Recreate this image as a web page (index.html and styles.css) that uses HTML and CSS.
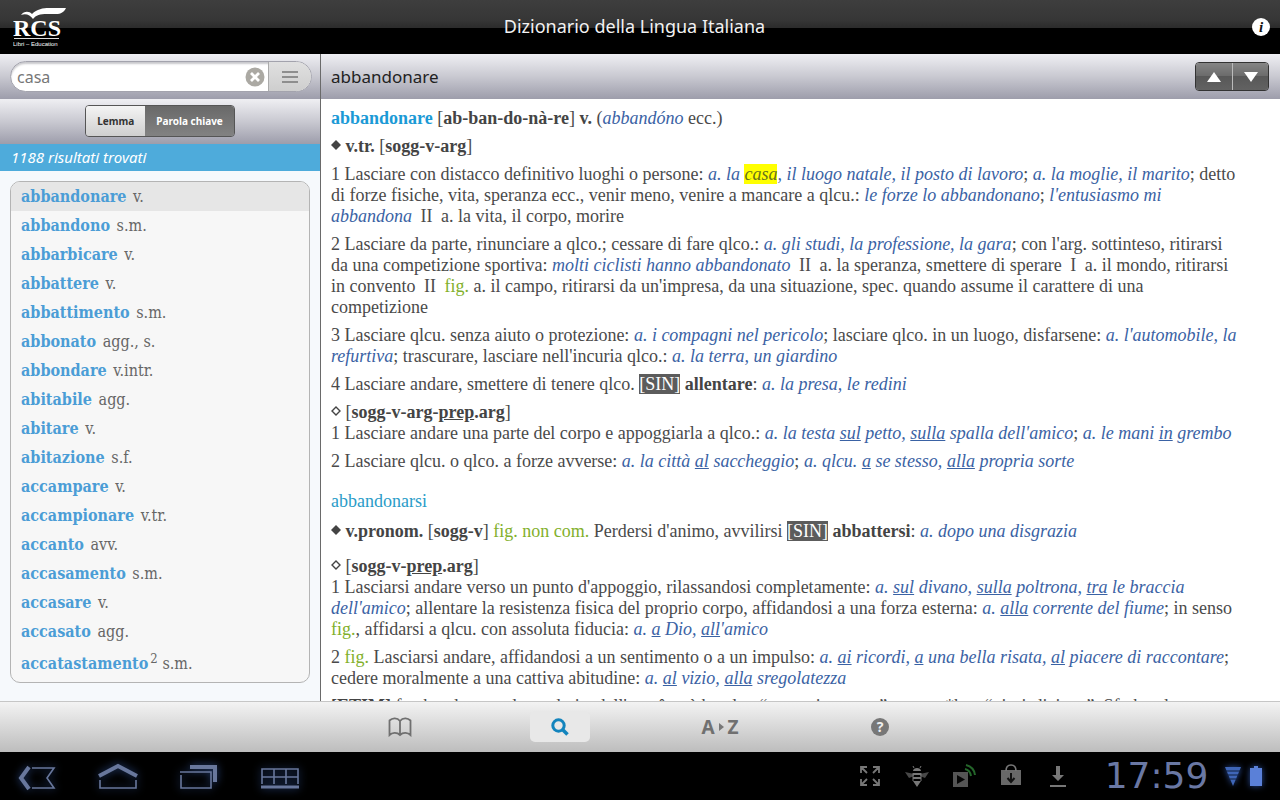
FILE: index.html
```html
<!DOCTYPE html>
<html lang="it">
<head>
<meta charset="utf-8">
<title>Dizionario della Lingua Italiana</title>
<link rel="stylesheet" href="styles.css">
</head>
<body>
<header class="titlebar">
  <svg class="logo" viewBox="0 0 56 42" role="img" aria-label="RCS Libri – Education">
    <path d="M8 9C11 5 16 5 19 8C24 3 30 2 36 2H53C51 6 48 8 43 8H34C27 8 23 9 20 13C17 9 13 7 8 9Z" fill="#fff"/>
    <text class="logo-name" x="0" y="30">RCS</text>
    <path d="M1 32.500H46" stroke="#ddd" stroke-width="1"/>
    <text class="logo-sub" x="0" y="40">Libri – Education</text>
  </svg>
  <h1 class="app-title">Dizionario della Lingua Italiana</h1>
  <button class="info" aria-label="Informazioni">i</button>
</header>

<main class="content">
  <aside class="sidebar">
    <form class="search-row">
      <div class="search-pill">
        <input class="search-input" type="text" value="casa" aria-label="Cerca">
        <button class="clear" type="button" aria-label="Cancella">
          <svg viewBox="0 0 20 20" width="20" height="20"><circle cx="10" cy="10" r="9.500" fill="#aba9a3"/><path d="M6 6L14 14M14 6L6 14" stroke="#fff" stroke-width="2.800"/></svg>
        </button>
        <button class="options" type="button" aria-label="Opzioni">
          <svg viewBox="0 0 16 14" width="16" height="14"><path d="M0 2H16M0 7H16M0 12H16" stroke="#8e8e8e" stroke-width="2"/></svg>
        </button>
      </div>
    </form>
    <div class="segment-row">
      <div class="segment">
        <button class="seg" type="button">Lemma</button>
        <button class="seg seg-on" type="button">Parola chiave</button>
      </div>
    </div>
    <p class="count">1188 risultati trovati</p>
    <div class="results">
      <ul class="list">
        <li class="item selected"><a href="#">abbandonare</a> v.</li>
        <li class="item"><a href="#">abbandono</a> s.m.</li>
        <li class="item"><a href="#">abbarbicare</a> v.</li>
        <li class="item"><a href="#">abbattere</a> v.</li>
        <li class="item"><a href="#">abbattimento</a> s.m.</li>
        <li class="item"><a href="#">abbonato</a> agg., s.</li>
        <li class="item"><a href="#">abbondare</a> v.intr.</li>
        <li class="item"><a href="#">abitabile</a> agg.</li>
        <li class="item"><a href="#">abitare</a> v.</li>
        <li class="item"><a href="#">abitazione</a> s.f.</li>
        <li class="item"><a href="#">accampare</a> v.</li>
        <li class="item"><a href="#">accampionare</a> v.tr.</li>
        <li class="item"><a href="#">accanto</a> avv.</li>
        <li class="item"><a href="#">accasamento</a> s.m.</li>
        <li class="item"><a href="#">accasare</a> v.</li>
        <li class="item"><a href="#">accasato</a> agg.</li>
        <li class="item last"><a href="#">accatastamento</a><sup>2</sup> s.m.</li>
      </ul>
    </div>
  </aside>

  <section class="entry">
    <div class="entry-bar">
      <h2 class="entry-title">abbandonare</h2>
      <div class="nav">
        <button class="nav-btn" aria-label="Precedente"><svg viewBox="0 0 14 10" width="14" height="10"><path d="M7 0L14 10H0Z" fill="#fff"/></svg></button>
        <button class="nav-btn" aria-label="Successivo"><svg viewBox="0 0 14 10" width="14" height="10"><path d="M0 0H14L7 10Z" fill="#fff"/></svg></button>
      </div>
    </div>
    <article class="text">
      <p><b class="head">abbandonare</b> [<b>ab-ban-do-nà-re</b>] <b>v.</b> (<i>abbandóno</i> ecc.)</p>
      <p><svg class="mark" viewBox="0 0 10 10"><path d="M5 0L10 5L5 10L0 5Z" fill="#444"/></svg> <b>v.tr.</b> [<b>sogg-v-arg</b>]</p>
      <p>1 Lasciare con distacco definitivo luoghi o persone: <i>a. la <mark>casa</mark>, il luogo natale, il posto di lavoro</i>; <i>a. la moglie, il marito</i>; detto<br>di forze fisiche, vita, speranza ecc., venir meno, venire a mancare a qlcu.: <i>le forze lo abbandonano</i>; <i>l'entusiasmo mi<br>abbandona</i> <span class="bars">II</span> a. la vita, il corpo, morire</p>
      <p>2 Lasciare da parte, rinunciare a qlco.; cessare di fare qlco.: <i>a. gli studi, la professione, la gara</i>; con l'arg. sottinteso, ritirarsi<br>da una competizione sportiva: <i>molti ciclisti hanno abbandonato</i> <span class="bars">II</span> a. la speranza, smettere di sperare <span class="bars">I</span> a. il mondo, ritirarsi<br>in convento <span class="bars">II</span> <span class="use">fig.</span> a. il campo, ritirarsi da un'impresa, da una situazione, spec. quando assume il carattere di una<br>competizione</p>
      <p>3 Lasciare qlcu. senza aiuto o protezione: <i>a. i compagni nel pericolo</i>; lasciare qlco. in un luogo, disfarsene: <i>a. l'automobile, la<br>refurtiva</i>; trascurare, lasciare nell'incuria qlco.: <i>a. la terra, un giardino</i></p>
      <p>4 Lasciare andare, smettere di tenere qlco. <span class="syn">[SIN]</span> <b>allentare</b>: <i>a. la presa, le redini</i></p>
      <p><svg class="mark" viewBox="0 0 10 10"><path d="M5 1L9 5L5 9L1 5Z" fill="none" stroke="#444" stroke-width="1.400"/></svg> [<b>sogg-v-arg-<u>prep</u>.arg</b>]<br>1 Lasciare andare una parte del corpo e appoggiarla a qlco.: <i>a. la testa <u>sul</u> petto, <u>sulla</u> spalla dell'amico</i>; <i>a. le mani <u>in</u> grembo</i></p>
      <p>2 Lasciare qlcu. o qlco. a forze avverse: <i>a. la città <u>al</u> saccheggio</i>; <i>a. qlcu. <u>a</u> se stesso, <u>alla</u> propria sorte</i></p>
      <h3 class="sub">abbandonarsi</h3>
      <p class="wide"><svg class="mark" viewBox="0 0 10 10"><path d="M5 0L10 5L5 10L0 5Z" fill="#444"/></svg> <b>v.pronom.</b> [<b>sogg-v</b>] <span class="use">fig. non com.</span> Perdersi d'animo, avvilirsi <span class="syn">[SIN]</span> <b>abbattersi</b>: <i>a. dopo una disgrazia</i></p>
      <p><svg class="mark" viewBox="0 0 10 10"><path d="M5 1L9 5L5 9L1 5Z" fill="none" stroke="#444" stroke-width="1.400"/></svg> [<b>sogg-v-<u>prep</u>.arg</b>]<br>1 Lasciarsi andare verso un punto d'appoggio, rilassandosi completamente: <i>a. <u>sul</u> divano, <u>sulla</u> poltrona, <u>tra</u> le braccia<br>dell'amico</i>; allentare la resistenza fisica del proprio corpo, affidandosi a una forza esterna: <i>a. <u>alla</u> corrente del fiume</i>; in senso<br><span class="use">fig.</span>, affidarsi a qlcu. con assoluta fiducia: <i>a. <u>a</u> Dio, <u>all</u>'amico</i></p>
      <p>2 <span class="use">fig.</span> Lasciarsi andare, affidandosi a un sentimento o a un impulso: <i>a. <u>ai</u> ricordi, <u>a</u> una bella risata, <u>al</u> piacere di raccontare</i>;<br>cedere moralmente a una cattiva abitudine: <i>a. <u>al</u> vizio, <u>alla</u> sregolatezza</i></p>
      <p><b>[ETIM]</b> fr. abandonner, da un deriv. dell'ant. être à bandon “essere in potere”, comp. *ban “giurisdizione”. Sfr. bando</p>
    </article>
  </section>
</main>

<nav class="toolbar">
  <button class="tool" aria-label="Dizionario">
    <svg viewBox="0 0 24 20" width="24" height="20" fill="none" stroke="#707070" stroke-width="1.800"><path d="M12 4C9 0 4 1 1.500 3.500V18C4 15.500 9 15 12 18C15 15 20 15.500 22.500 18V3.500C20 1 15 0 12 4ZM12 4V18"/></svg>
  </button>
  <button class="tool tool-on" aria-label="Cerca">
    <svg viewBox="0 0 18 18" width="18" height="18" fill="none" stroke="#1384bd"><circle cx="7.500" cy="7.500" r="5.700" stroke-width="3"/><path d="M11.500 11.500L16.500 16.500" stroke-width="3.600"/></svg>
  </button>
  <button class="tool tool-az" aria-label="Indice A-Z">A<svg viewBox="0 0 5 8" width="5" height="8"><path d="M0 0L5 4L0 8Z" fill="#777"/></svg>Z</button>
  <button class="tool" aria-label="Aiuto"><span class="help">?</span></button>
</nav>

<footer class="system">
  <div class="keys">
    <button class="key" aria-label="Indietro"><svg viewBox="0 0 40 30" width="40" height="30" fill="none" stroke="#68779c"><path d="M12 6L4 17L12 28" stroke-width="4"/><path d="M15 7H37L30 17L37 27H15" stroke-width="1.600"/></svg></button>
    <button class="key" aria-label="Home"><svg viewBox="0 0 40 30" width="40" height="30" fill="none" stroke="#68779c"><path d="M1 15L20 5L39 15" stroke-width="4"/><path d="M2 19V27H38V19" stroke-width="1.600"/></svg></button>
    <button class="key" aria-label="Recenti"><svg viewBox="0 0 40 30" width="40" height="30" fill="none" stroke="#68779c"><path d="M11 6H36V21" stroke-width="4"/><path d="M1 11H32V27H2V14" stroke-width="1.600"/></svg></button>
    <button class="key" aria-label="Tastiera"><svg viewBox="0 0 40 30" width="40" height="30" fill="none" stroke="#68779c"><path d="M2 23V8H38V23M2 16H38M14 8V23M26 8V23" stroke-width="1.600"/><path d="M1 26H39" stroke-width="3"/></svg></button>
  </div>
  <div class="status">
    <svg class="note" viewBox="0 0 24 24" fill="none" stroke="#777" stroke-width="1.800"><path d="M3 9V3H9M3 3L9 9M15 3H21V9M21 3L15 9M3 15V21H9M3 21L9 15M15 21H21V15M21 21L15 15"/></svg>
    <svg class="note" viewBox="0 0 24 24"><path d="M0 8L9 10V12L4 14ZM24 8L15 10V12L20 14Z" fill="#484848"/><path d="M8 7C8 3 16 3 16 7ZM8 9H16V11H8ZM8 13H16V15H8ZM8 17H16L12 23Z" fill="#777"/><path d="M9 4L8 2M15 4L16 2M8 9V17M16 9V17" stroke="#777"/></svg>
    <svg class="note" viewBox="0 0 24 24"><path d="M1 8H16V23H1Z" fill="#555"/><path d="M5 11L13 15.500L5 20Z" fill="#050505"/><path d="M13 5Q18 6 19 12M14 1Q22 3 23 11" fill="none" stroke="#24662a" stroke-width="2"/></svg>
    <svg class="note" viewBox="0 0 24 24"><path d="M2 6H22V21H2Z" fill="#686868"/><path d="M7 7Q7 1 12 1T17 7" fill="none" stroke="#777" stroke-width="1.600"/><path d="M12 9V17M8.500 14L12 18L15.500 14" fill="none" stroke="#111" stroke-width="2"/></svg>
    <svg class="note" viewBox="0 0 24 24"><path d="M10 2H14V11H18L12 17L6 11H10ZM4 21H20V23H4Z" fill="#777"/></svg>
    <time class="clock">17:59</time>
    <svg class="signal" viewBox="0 0 16 20" width="16" height="20"><path d="M0 1H16L8 20Z" fill="#3f66b8"/><path d="M1 5H15M3 9H13M5 13H11" stroke="#10203f"/></svg>
    <svg class="battery" viewBox="0 0 12 20" width="12" height="20"><path d="M4 0H8V2H12V20H0V2H4Z" fill="#5a80d8"/></svg>
  </div>
</footer>
</body>
</html>
```
FILE: styles.css
```css
* { box-sizing: border-box; margin: 0; padding: 0; }
html, body { height: 100%; }
body {
  display: flex;
  flex-direction: column;
  overflow: hidden;
  background: #fff;
  font-family: "Noto Sans", "Open Sans", sans-serif;
}
button { border: 0; background: none; font-family: inherit; }

.titlebar {
  display: grid;
  grid-template-columns: 1fr auto 1fr;
  align-items: center;
  flex: none;
  height: 54px;
  padding: 0 10px 0 13px;
  background: linear-gradient(#3e3e3e 0, #363636 20px, #2b2b2b 28px, #000 28px);
}
.logo { width: 56px; height: 42px; }
.logo-name { font: bold 24px "Liberation Serif", serif; fill: #fff; }
.logo-sub { font: 6px "Liberation Sans", sans-serif; fill: #fff; }
.app-title {
  padding: 0 14px 2px 0;
  color: #f2f2f2;
  font-size: 18px;
  font-weight: 400;
  line-height: 50px;
}
.info {
  justify-self: end;
  width: 18px;
  height: 18px;
  border-radius: 50%;
  background: #fff;
  color: #111;
  font: italic bold 15px/18px "Liberation Serif", serif;
}

.content { display: flex; flex: 1; min-height: 0; }
.sidebar {
  display: flex;
  flex-direction: column;
  flex: none;
  width: 321px;
  border-right: 1px solid #6a6a6a;
  background: #f6f9fc;
}
.search-row, .segment-row, .entry-bar {
  display: flex;
  align-items: center;
  flex: none;
  height: 45px;
  padding: 0 10px;
  background: linear-gradient(#efeff3, #c9c9d1 50%, #9d9dab);
}
.search-row { padding: 0 8px 0 10px; }
.search-pill {
  display: flex;
  align-items: center;
  flex: 1;
  height: 31px;
  overflow: hidden;
  border: 1px solid #a3a3ad;
  border-radius: 16px;
  background: #fff;
  box-shadow: inset 0 2px 2px #c8c8cc;
}
.search-input {
  flex: 1;
  min-width: 0;
  height: 29px;
  padding-left: 6px;
  border: 0;
  outline: 0;
  background: transparent;
  color: #777;
  font: 16px "Noto Sans", sans-serif;
}
.clear { display: flex; margin-right: 3px; }
.options {
  display: flex;
  align-items: center;
  justify-content: center;
  width: 43px;
  height: 29px;
  border-left: 1px solid #aaa;
  background: linear-gradient(#e0e0e0, #cecece);
}
.segment-row { justify-content: center; padding-bottom: 2px; }
.segment {
  display: flex;
  height: 32px;
  overflow: hidden;
  border: 1px solid #555;
  border-radius: 4px;
}
.seg {
  padding: 0 11px;
  background: linear-gradient(#f4f4f4, #cfcfcf);
  color: #333;
  font-size: 10px;
  font-weight: 700;
}
.seg-on { background: linear-gradient(#696969, #828282); color: #fff; }
.count {
  flex: none;
  padding-left: 11px;
  background: #4eabdb;
  color: #fff;
  font-size: 15px;
  font-style: italic;
  line-height: 27px;
}
.results { flex: 1; min-height: 0; padding: 10px; overflow: hidden; }
.list {
  overflow: hidden;
  border: 1px solid #b4b4b4;
  border-radius: 10px;
  background: #f7f7f7;
  list-style: none;
}
.item {
  padding-left: 10px;
  color: #666;
  font: 16px/29px "DejaVu Serif Condensed", "DejaVu Serif", serif;
}
.item a { margin-right: 2px; color: #4b9dd6; font-weight: 700; text-decoration: none; }
.item sup { font-size: 13px; line-height: 13px; }
.selected { background: #e6e6e6; }
.last { padding-top: 3px; padding-bottom: 4px; }

.entry { display: flex; flex-direction: column; flex: 1; min-width: 0; }
.entry-bar { justify-content: space-between; padding-right: 11px; }
.entry-title { color: #222; font-size: 17px; font-weight: 400; }
.nav {
  display: flex;
  height: 29px;
  overflow: hidden;
  border: 1px solid #333;
  border-radius: 4px;
}
.nav-btn {
  display: flex;
  align-items: center;
  justify-content: center;
  width: 36px;
  background: linear-gradient(#858585, #6a6a6a 50%, #585858 50%, #626262);
}
.nav-btn + .nav-btn { border-left: 1px solid #bbb; }
.text {
  flex: 1;
  min-height: 0;
  overflow: hidden;
  padding: 9px 10px 0;
  color: #4a4a4a;
  font: 18px/21px "Liberation Serif", serif;
  white-space: nowrap;
}
.text p { margin-bottom: 7px; }
.text b { color: #444; }
.text .head { color: #1b9ad6; }
.text i { color: #3a62a4; }
.text mark { background: #ff0; color: #66701c; }
.text .wide { margin-bottom: 14px; }
.sub { margin: 19px 0 9px; color: #2a9cc8; font-size: 18px; font-weight: 400; line-height: 21px; }
.mark { width: 10px; height: 10px; vertical-align: 2px; }
.use { color: #82b02c; }
.bars { padding: 0 4px; }
.syn { background: #5c5c5c; color: #fff; }

.toolbar {
  display: flex;
  justify-content: center;
  gap: 100px;
  flex: none;
  height: 51px;
  padding-top: 9px;
  border-top: 1px solid #c6c6c6;
  background: linear-gradient(#f3f3f3, #bdbdbd);
}
.tool {
  display: flex;
  align-items: center;
  justify-content: center;
  width: 60px;
  height: 31px;
  border-radius: 5px;
}
.tool-on { background: #e8e8e8; }
.tool-az { gap: 4px; color: #707070; font-size: 19px; font-weight: 700; }
.help {
  width: 18px;
  height: 18px;
  border-radius: 50%;
  background: #777;
  color: #eee;
  font-size: 14px;
  font-weight: 700;
  line-height: 18px;
}

.system {
  display: flex;
  align-items: center;
  justify-content: space-between;
  flex: none;
  height: 48px;
  padding: 0 18px 0 17px;
  background: #000;
}
.keys { display: flex; gap: 41px; }
.key { display: flex; filter: drop-shadow(0 0 4px #29467e); }
.status { display: flex; align-items: center; }
.note { width: 24px; height: 24px; margin-right: 23px; }
.clock {
  width: 127px;
  color: #6a78a4;
  font: 36px/48px "DejaVu Sans", sans-serif;
  text-align: center;
}
.signal { margin: 0 9px 0 5px; }
.signal, .battery { filter: drop-shadow(0 0 3px #274a96); }
```
